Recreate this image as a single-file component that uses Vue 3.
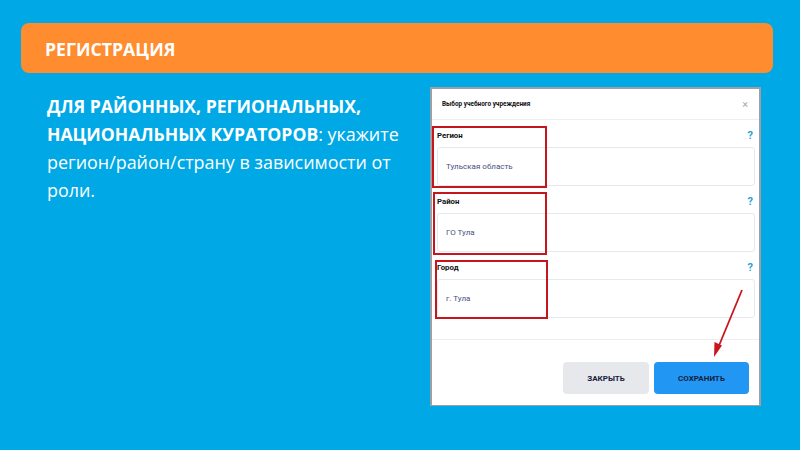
<script setup>
// --- Data ---
const fields = [
  { label: 'Регион', value: 'Тульская область' },
  { label: 'Район', value: 'ГО Тула' },
  { label: 'Город', value: 'г. Тула' }
]
</script>

<template>
  <div class="page">
    <header class="banner">РЕГИСТРАЦИЯ</header>

    <main class="content">
      <p class="lead">
        <b>ДЛЯ РАЙОННЫХ, РЕГИОНАЛЬНЫХ, НАЦИОНАЛЬНЫХ КУРАТОРОВ</b>: укажите регион/район/страну в зависимости от роли.
      </p>

      <section class="modal">
        <div class="modal-head">
          <span class="modal-title">Выбор учебного учреждения</span>
          <span class="modal-close">×</span>
        </div>

        <div class="modal-body">
          <div v-for="field in fields" :key="field.label" class="field">
            <div class="field-top">
              <span class="field-label">{{ field.label }}</span>
              <span class="field-help">?</span>
            </div>
            <div class="field-input">{{ field.value }}</div>
          </div>
        </div>

        <div class="modal-foot">
          <button class="btn btn-close">ЗАКРЫТЬ</button>
          <button class="btn btn-save">СОХРАНИТЬ</button>
        </div>

        <!-- annotations drawn over the screenshot -->
        <i class="mark mark-1"></i>
        <i class="mark mark-2"></i>
        <i class="mark mark-3"></i>
        <svg class="arrow" width="40" height="80" viewBox="0 0 40 80">
          <path d="M31 2 L7 60" stroke="#c8161d" stroke-width="1.8" fill="none" />
          <path d="M3 69 L3.5 54 L11 57.5 Z" fill="#c8161d" />
        </svg>
      </section>
    </main>
  </div>
</template>

<style>
html,
body {
  margin: 0;
}
</style>

<style scoped>
.page {
  width: 800px;
  height: 450px;
  overflow: hidden;
  box-sizing: border-box;
  padding: 23px 27px 0 21px;
  background: #00a9e6;
  font-family: 'Open Sans', 'Noto Sans', sans-serif;
  color: #fff;
}

/* --- Banner --- */
.banner {
  height: 50px;
  box-sizing: border-box;
  padding: 1px 0 0 24px;
  line-height: 50px;
  border-radius: 8px;
  background: #ff8c2e;
  font-size: 17.7px;
  font-weight: 700;
}

/* --- Content --- */
.content {
  display: flex;
  justify-content: space-between;
  padding: 14px 12px 0 26px;
}

.lead {
  width: 362px;
  margin: 5px 0 0;
  font-size: 17.9px;
  line-height: 28px;
}

.lead b {
  font-size: 17.6px;
}

/* --- Modal --- */
.modal {
  position: relative;
  width: 331px;
  height: 319px;
  box-sizing: border-box;
  border: 2px solid #9aa0a5;
  border-bottom-width: 1px;
  background: #fff;
  color: #111;
  font-family: Roboto, 'Liberation Sans', sans-serif;
}

.modal-head {
  display: flex;
  justify-content: space-between;
  align-items: center;
  height: 30px;
  padding: 0 11px 0 10px;
  border-bottom: 1px solid #eceef0;
}

.modal-title {
  font-size: 6.4px;
  font-weight: 700;
}

.modal-close {
  font-size: 11px;
  color: #a6a9ad;
}

.modal-body {
  display: flex;
  flex-direction: column;
  gap: 3px;
  height: 220px;
  box-sizing: border-box;
  padding: 3px 4px 0 5px;
  border-bottom: 1px solid #eceef0;
}

.field-top {
  display: flex;
  justify-content: space-between;
  align-items: center;
  height: 24px;
}

.field-label {
  font-size: 7.8px;
  font-weight: 700;
}

.field-help {
  padding-right: 2px;
  font-size: 11px;
  font-weight: 700;
  color: #2b9fd0;
}

.field-input {
  height: 39px;
  box-sizing: border-box;
  padding-left: 8px;
  line-height: 37px;
  border: 1px solid #e6e9ec;
  border-radius: 3px;
  font-size: 8px;
  color: #47507f;
}

.modal-foot {
  display: flex;
  justify-content: flex-end;
  gap: 5px;
  padding: 22px 10px 0 0;
}

.btn {
  height: 32px;
  padding: 0;
  border: none;
  border-radius: 4px;
  font-family: inherit;
  font-size: 8px;
  font-weight: 700;
  color: #14213d;
}

.btn-close {
  width: 86px;
  background: #e7e8ec;
}

.btn-save {
  width: 95px;
  background: #2196f3;
}

/* --- Annotations --- */
.mark {
  position: absolute;
  box-sizing: border-box;
  border: 2px solid #c4161c;
}

.mark-1 {
  left: 0;
  top: 37px;
  width: 115px;
  height: 62px;
}

.mark-2 {
  left: 1px;
  top: 103px;
  width: 114px;
  height: 63px;
}

.mark-3 {
  left: 3px;
  top: 171px;
  width: 113px;
  height: 59px;
}

.arrow {
  position: absolute;
  left: 279px;
  top: 199px;
}
</style>
